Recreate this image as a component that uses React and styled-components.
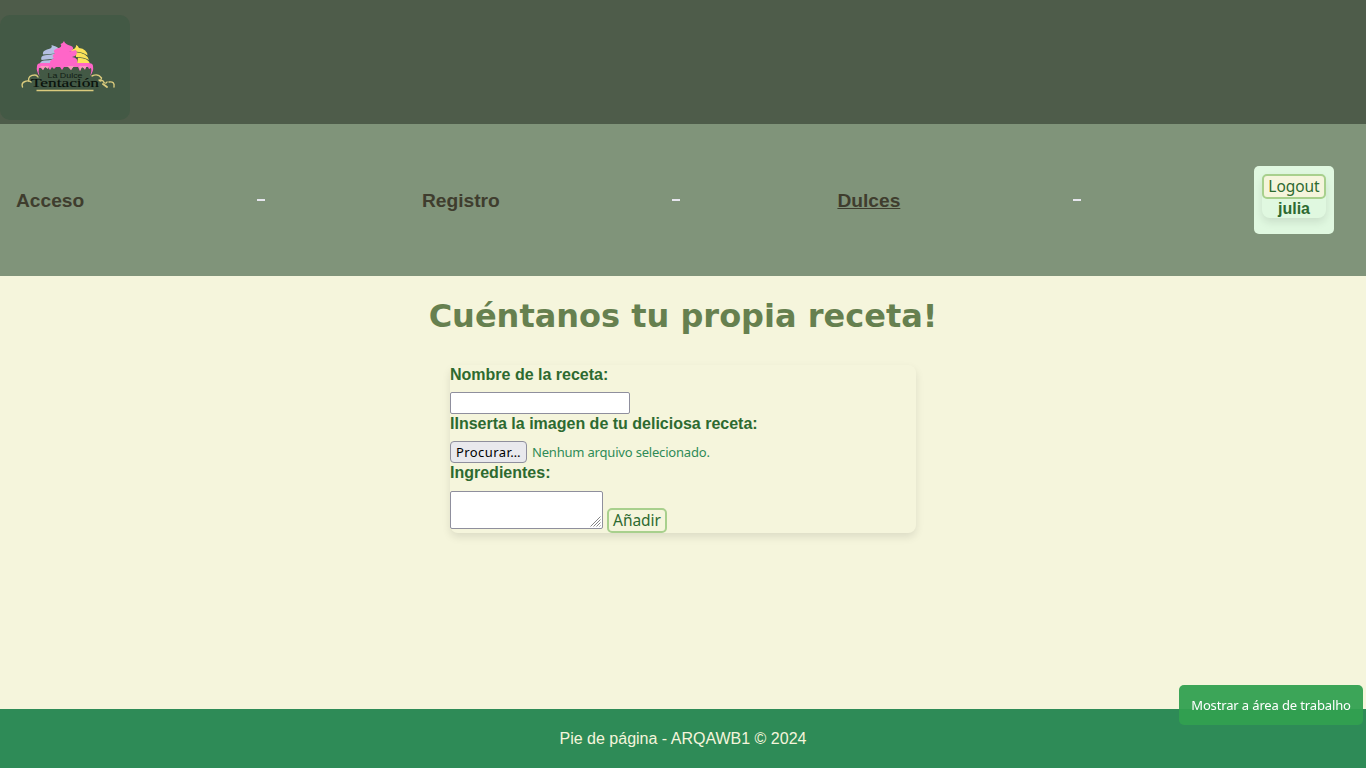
import React from "react";
import styled, { createGlobalStyle } from "styled-components";

const Global = createGlobalStyle`
  * { box-sizing: border-box; }
  body {
    margin: 0;
    background: #f5f5dc;
    color: #2e8b57;
    font: 16px/18px "Liberation Sans", Arial, sans-serif;
  }
`;

const ui = `"Noto Sans", "Open Sans", sans-serif`;

const Page = styled.div`
  height: 768px;
  display: flex;
  flex-direction: column;
  overflow: hidden;
`;

const Header = styled.header`
  height: 124px;
  flex: none;
  padding-top: 15px;
  background: #4e5c4a;
`;

const LogoBox = styled.div`
  width: 130px;
  height: 105px;
  border-radius: 10px;
  background: #435945;
  overflow: hidden;
`;

const LogoSvg = styled.svg`
  display: block;
`;

const Nav = styled.nav`
  height: 152px;
  flex: none;
  padding: 0 16px;
  display: flex;
  align-items: center;
  justify-content: space-between;
  background: #80947a;
`;

const NavLink = styled.a`
  margin-right: 16px;
  padding-top: 2px;
  color: #3f3d2e;
  font-size: 19.2px;
  line-height: 22px;
  font-weight: bold;
  text-decoration: ${(p) => (p.$active ? "underline" : "none")};
`;

const Dash = styled.span`
  width: 8px;
  height: 2px;
  margin: 0 0.3px 0 -0.3px;
  background: #e6e6ee;
`;

const UserCard = styled.div`
  width: 80px;
  height: 68px;
  margin: 0 16px;
  padding: 8px;
  border-radius: 5px;
  background: #e0f8e0;
`;

const UserPanel = styled.div`
  height: 44px;
  border-radius: 8px;
  box-shadow: 0 4px 8px rgba(0, 0, 0, 0.1);
  color: #2d6a30;
  font-weight: bold;
  line-height: 19px;
  text-align: center;
`;

const Button = styled.button`
  display: block;
  width: ${(p) => p.$width}px;
  height: 25px;
  padding: 0 0 1px;
  border: 2px solid #a8d08d;
  border-radius: 5px;
  background: #f5f5dc;
  color: #2d6a30;
  font: 15.5px/20px ${ui};
  letter-spacing: -0.05px;
  white-space: nowrap;
`;

const Main = styled.main`
  flex: 1;
  display: flex;
  flex-direction: column;
  align-items: center;
`;

const Title = styled.h1`
  margin: 21px 0 30px;
  color: #66804f;
  font: bold 32px/38px "DejaVu Sans", Verdana, sans-serif;
`;

const Form = styled.form`
  width: 466px;
  height: 168px;
  border-radius: 8px;
  box-shadow: 0 4px 8px rgba(0, 0, 0, 0.1);
`;

const Label = styled.label`
  display: block;
  height: 27px;
  padding-top: 1px;
  color: #2d6a30;
  font-weight: bold;
`;

const TextInput = styled.input`
  display: block;
  width: 180px;
  height: 22px;
  border: 1px solid #8f8f9d;
  border-radius: 2px;
  background: #fff;
`;

const FileRow = styled.div`
  display: flex;
  gap: 5px;
  height: 22px;
  font: 13px/22px ${ui};
`;

const FileButton = styled.button`
  width: 77px;
  padding: 0;
  border: 1px solid #8f8f9d;
  border-radius: 4px;
  background: #e9e9ed;
  color: #000;
  font: 13px/20px ${ui};
  letter-spacing: 0.45px;
`;

const FileStatus = styled.span`
  color: #2e8b57;
  letter-spacing: -0.19px;
  white-space: nowrap;
`;

const IngredientsRow = styled.div`
  display: flex;
  align-items: flex-end;
  gap: 4px;
  height: 42px;
  margin-top: 1px;
`;

const AreaWrap = styled.div`
  width: 153px;
  height: 38px;
  align-self: flex-start;
  display: flex;
  align-items: flex-end;
  justify-content: flex-end;
  padding: 0 1px 1px 0;
  border: 1px solid #8f8f9d;
  border-radius: 2px;
  background: #fff;
`;

const Area = styled.textarea`
  flex: 1;
  height: 34px;
  min-width: 0;
  border: 0;
  padding: 0;
  outline: 0;
  resize: none;
  background: transparent;
`;

const Group = styled.div`
  height: 49px;
`;

const Footer = styled.footer`
  height: 59px;
  flex: none;
  padding-top: 21px;
  background: #2e8b57;
  color: #f5f5dc;
  text-align: center;
`;

const Tooltip = styled.div`
  position: fixed;
  right: 3px;
  top: 685px;
  width: 184px;
  height: 40px;
  border-radius: 5px;
  background: rgba(50, 160, 80, 0.95);
  color: #fff;
  font: 13px/40px ${ui};
  letter-spacing: -0.14px;
  text-align: center;
  white-space: nowrap;
`;

function Logo() {
  return (
    <LogoSvg width="130" height="105" viewBox="0 15 130 105">
      <g fill="#b4bfe2">
        <path d="M43 54.5 Q42 51 47 49.5 Q53 48.5 51.5 45 Q56 46 60 49 L58 53 Q51 54 43 54.5Z" />
        <path d="M41.5 60 Q40 56 45 55.2 Q51 55 57 53 L56 58.5 Q49 59 41.5 60Z" />
        <path d="M40 64 Q40 61 44 60.5 Q49 60.5 54 59 V64Z" />
      </g>
      <g fill="#fce35a">
        <path d="M69 50.5 Q77 49 76 45 Q78 45.5 79 48 Q87 49 87.5 55.5 Q83 52 75 51.5Z" />
        <path d="M76 52.3 Q87 53 89 60 Q84 57 76 57Z" />
        <path d="M78 57.8 Q88 58 90 63.5 H77Z" />
      </g>
      <path d="M50 64 Q49 60 54 58.5 Q51 55 55 53.5 Q52 50 57 48.5 Q63 47 60.5 44 Q63 43.5 64 41 Q65 44 69 45.2 Q74 46.5 73 49 Q72 51 69 51.5 L76 50 Q78 54 75 56 L72 57 Q79 58 77 64Z" fill="#ff66c8" />
      <path d="M37 66 Q37 63 42 63 H88 Q93 63 93 66 Q94 71 90 76 Q92 71 91 68 L89 69 L88 67 L86 67 L85 70 L83 67 L81 68 L80 71 L78 67 L73 67 L71 70 L69 67 L64 67 L62 70 L60 67 L56 67 L54 69 L52 67 L50 70 L48 67 L45 67 L43 70 L41 68 L39 68 Q38 71 39.5 76 Q36 71 37 66Z" fill="#ff66c8" />
      <path d="M40 66 H49 L48 69 L45 67 L43 70Z M67 66 H74 L71 70Z M79 66H87L85 69L82 67L80 71Z" fill="#f99bbb" />
      <g fill="none" stroke="#d9ca7d" strokeWidth="1.4" strokeLinecap="round">
        <path d="M22.5 87 Q21 83 25 81.5 Q28 80 31 82" />
        <path d="M28.5 81 Q28 75 35 75 Q37 75 38 77" />
        <path d="M92 76 Q98 73 101.5 78 Q101 81 99 80" />
        <path d="M100 81 Q103 79.5 104 82.5 Q106 84 107 82" />
        <path d="M103 84 L107 87" strokeWidth="2" />
        <path d="M109 82 Q115 81 114 87" />
        <path d="M36.5 90.5 H93.5" strokeLinecap="butt" strokeWidth="1.6" />
      </g>
      <text x="47.5" y="77.8" fontFamily="Liberation Sans" fontSize="6.6" textLength="35" lengthAdjust="spacingAndGlyphs" fill="#111c14">La Dulce</text>
      <text x="31" y="87" fontFamily="Liberation Serif" fontSize="11.5" textLength="68" lengthAdjust="spacingAndGlyphs" fill="#08100a" stroke="#08100a" strokeWidth="0.15">Tentación</text>
    </LogoSvg>
  );
}

function ResizeGrip() {
  return (
    <svg width="11" height="11" viewBox="0 0 11 11" fill="none" stroke="#777" strokeWidth="0.9">
      <path d="M0.5 10.5 L10.5 0.5M3.5 10.5 L10.5 3.5M6.5 10.5 L10.5 6.5M9.5 10.5 L10.5 9.5" />
    </svg>
  );
}

export default function App() {
  return (
    <Page>
      <Global />
      <Header>
        <LogoBox><Logo /></LogoBox>
      </Header>
      <Nav>
        <NavLink>Acceso</NavLink>
        <Dash />
        <NavLink>Registro</NavLink>
        <Dash />
        <NavLink $active>Dulces</NavLink>
        <Dash />
        <UserCard>
          <UserPanel>
            <Button $width={64}>Logout</Button>
            julia
          </UserPanel>
        </UserCard>
      </Nav>
      <Main>
        <Title>Cuéntanos tu propia receta!</Title>
        <Form onSubmit={(e) => e.preventDefault()}>
          <Group>
            <Label htmlFor="nombre">Nombre de la receta:</Label>
            <TextInput id="nombre" />
          </Group>
          <Group>
            <Label>IInserta la imagen de tu deliciosa receta:</Label>
            <FileRow>
              <FileButton type="button">Procurar…</FileButton>
              <FileStatus>Nenhum arquivo selecionado.</FileStatus>
            </FileRow>
          </Group>
          <Label htmlFor="ingredientes">Ingredientes:</Label>
          <IngredientsRow>
            <AreaWrap>
              <Area id="ingredientes" />
              <ResizeGrip />
            </AreaWrap>
            <Button $width={60}>Añadir</Button>
          </IngredientsRow>
        </Form>
      </Main>
      <Footer>Pie de página - ARQAWB1 © 2024</Footer>
      <Tooltip>Mostrar a área de trabalho</Tooltip>
    </Page>
  );
}
